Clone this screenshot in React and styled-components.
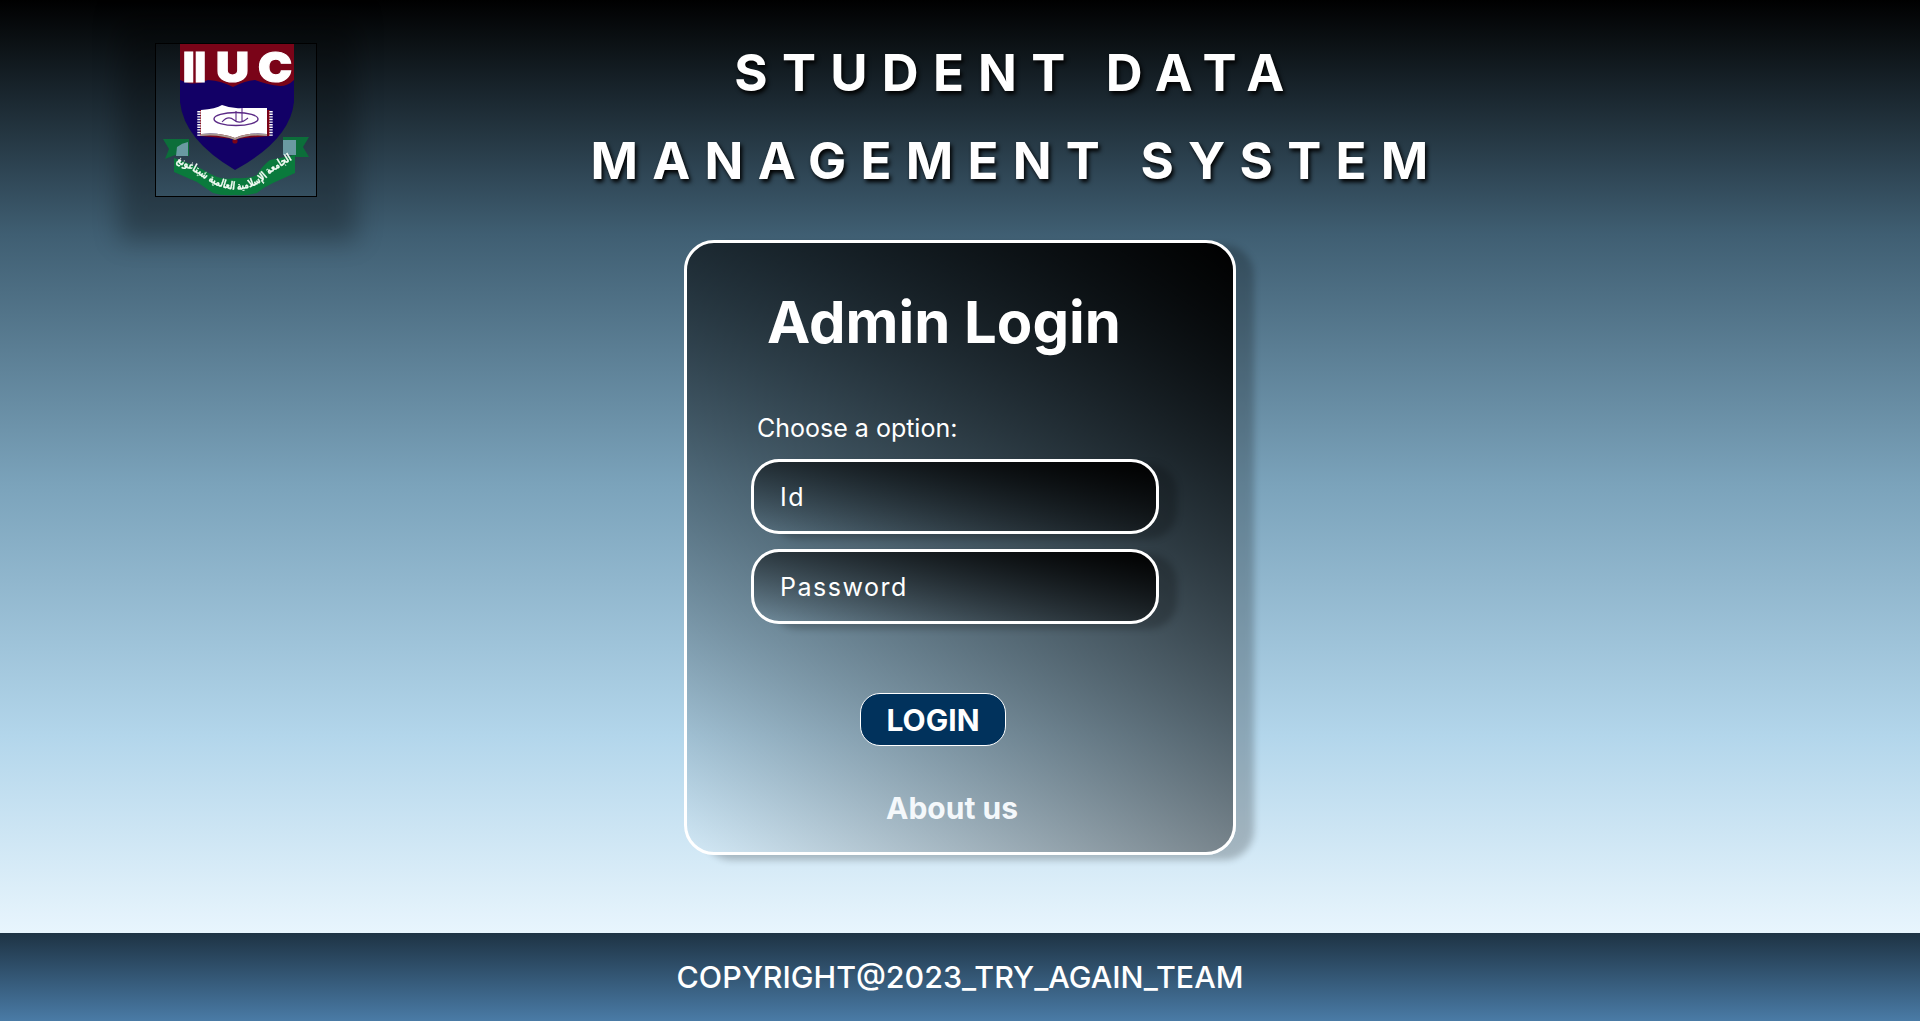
import React from "react";
import styled, { createGlobalStyle } from "styled-components";

const Global = createGlobalStyle`
  html, body {
    margin: 0;
    padding: 0;
    background: #fff;
    font-family: "Inter", "Liberation Sans", sans-serif;
  }
  * { box-sizing: border-box; }
`;

const Page = styled.div`
  height: 933px;
  background: linear-gradient(
    to bottom,
    #000000 0%,
    #3f5e72 25%,
    #7ba3bb 52%,
    #b3d6eb 79%,
    #e8f5fd 100%
  );
`;

const Header = styled.header`
  display: flex;
  align-items: flex-start;
  height: 240px;
  padding: 43px 204px 0 155px;
`;

const LogoBox = styled.div`
  flex: none;
  width: 162px;
  height: 154px;
  border: 1px solid #000;
  box-shadow: 2px 6px 24px 38px rgba(0, 0, 0, 0.28);
`;

const LogoArt = styled.svg`
  display: block;
  overflow: visible;
  filter: blur(0.3px);
`;

const TitleBlock = styled.div`
  flex: 1;
  display: flex;
  flex-direction: column;
  align-items: center;
  gap: 28px;
`;

const TitleLine = styled.h1`
  margin: 0;
  height: 60px;
  line-height: 60px;
  font-size: 51px;
  font-weight: 700;
  letter-spacing: 14.25px;
  color: #fff;
  white-space: pre;
  text-shadow: 2px 3px 4px #000;
`;

const Card = styled.main`
  width: 552px;
  height: 615px;
  margin: 0 auto;
  padding: 44px 60px 0 64px;
  border: 3px solid #fff;
  border-radius: 30px;
  background: linear-gradient(220deg, #000000, rgba(0, 0, 0, 0));
  box-shadow: 18px 5px 7px rgba(0, 0, 0, 0.22);
  display: flex;
  flex-direction: column;
`;

const CardTitle = styled.h2`
  margin: 0 0 0 16px;
  font-size: 58px;
  line-height: 70px;
  font-weight: 700;
  color: #fff;
`;

const OptionLabel = styled.label`
  margin: 56px 0 0 6px;
  font-size: 25px;
  line-height: 30px;
  font-weight: 400;
  color: #fff;
`;

const Field = styled.div`
  width: 408px;
  height: 75px;
  margin-top: ${(p) => p.$top}px;
  padding-left: 26px;
  display: flex;
  align-items: center;
  border: 3px solid #fff;
  border-radius: 28px;
  background: linear-gradient(to bottom left, #000000, rgba(0, 0, 0, 0));
  box-shadow: 18px 5px 7px rgba(0, 0, 0, 0.22);
  font-size: 25px;
  letter-spacing: 1.5px;
  color: #fff;
`;

const LoginButton = styled.button`
  width: 146px;
  height: 53px;
  margin: 69px 0 0 109px;
  padding: 0;
  border: 1px solid #fff;
  border-radius: 20px;
  background: #01325c;
  font-family: inherit;
  font-size: 30px;
  font-weight: 700;
  color: #fff;
`;

const AboutLink = styled.a`
  align-self: flex-start;
  margin: 44px 0 0 135px;
  font-size: 30px;
  line-height: 36px;
  font-weight: 700;
  color: #f4f8fb;
`;

const Footer = styled.footer`
  height: 88px;
  display: flex;
  align-items: center;
  justify-content: center;
  background: linear-gradient(to bottom, #1e3344, #4a7ba6);
  font-size: 30.4px;
  font-weight: 500;
  color: #fff;
`;

const Logo = () => (
  <LogoArt width="160" height="152" viewBox="0 0 160 152">
    {/* flags behind the ribbon */}
    <path d="M7 95H33V112L19 111L9 115L13 105Z" fill="#0c6e3a" />
    <path d="M21 103Q26 99 32 98V112H20Z" fill="#6a9aa2" />
    <path d="M127 93H153L147 103L153 113H140L127 108Z" fill="#0c6e3a" />
    <rect x="127" y="96" width="13" height="15" fill="#6a9aa2" />

    {/* shield */}
    <path d="M24 0H138V58Q134 96 79 126Q28 96 24 58Z" fill="#120066" />
    <path
      d="M24 0H138V36Q132 42 124 42Q112 41 99 36Q88 37 77 43Q66 37 52 36Q42 41 32 39L24 36Z"
      fill="#7a0418"
    />
    <text y="38" fontFamily="Inter, sans-serif" fontWeight="900" fontSize="41" fill="#fff" stroke="#fff" strokeWidth="1.2">
      <tspan x="27" textLength="23" lengthAdjust="spacingAndGlyphs">II</tspan>
      <tspan x="60" textLength="33" lengthAdjust="spacingAndGlyphs">U</tspan>
      <tspan x="102" textLength="34" lengthAdjust="spacingAndGlyphs">C</tspan>
    </text>

    {/* open book */}
    <path d="M44 92L79 95L114 92V66H110V90H48V66H44Z" fill="#7a0418" />
    <circle cx="79" cy="97" r="2.6" fill="#7a0418" />
    <path d="M45 66Q60 65 66 61Q76 65 86 64L111 64V90Q92 88 79 94Q64 88 45 90Z" fill="#fff" />
    <path d="M45 90Q64 88 79 94Q92 88 111 90V92Q92 90 79 96Q64 90 45 92Z" fill="#a89a90" />
    <path d="M43 67V92M115 67V92" stroke="#fff" strokeWidth="3.4" strokeDasharray="1.4 1.2" fill="none" />
    <ellipse cx="80" cy="75" rx="22" ry="6.5" fill="none" stroke="#5b2a86" strokeWidth="1.4" />
    <path d="M66 78Q72 71 78 76T92 74M86 64V78M80 67V78" fill="none" stroke="#5b2a86" strokeWidth="1.1" />

    {/* ribbon with the motto */}
    <path
      d="M18 114L42 123Q52 129 61 133Q70 136 79 134Q92 135 101 131Q106 122 114 116L139 111V129L117 139Q108 143 101 149Q90 152 79 151Q66 152 57 149Q48 143 41 138L18 128Z"
      fill="#0a7a3c"
    />
    <path id="mottoCurve" d="M20 118L42 130Q60 144 79 146Q102 145 116 128L137 115" fill="none" />
    <text fontFamily="'DejaVu Sans', sans-serif" fontSize="11" fontWeight="700" fill="#f2fbf4" stroke="#f2fbf4" strokeWidth="0.25">
      <textPath href="#mottoCurve" textLength="132" lengthAdjust="spacingAndGlyphs">
        الجامعة الإسلامية العالمية شيتاغونغ
      </textPath>
    </text>
  </LogoArt>
);

export default function App() {
  return (
    <>
      <Global />
      <Page>
        <Header>
          <LogoBox>
            <Logo />
          </LogoBox>
          <TitleBlock>
            <TitleLine>STUDENT DATA</TitleLine>
            <TitleLine>MANAGEMENT SYSTEM</TitleLine>
          </TitleBlock>
        </Header>
        <Card>
          <CardTitle>Admin Login</CardTitle>
          <OptionLabel>Choose a option:</OptionLabel>
          <Field $top={16}>Id</Field>
          <Field $top={15}>Password</Field>
          <LoginButton>LOGIN</LoginButton>
          <AboutLink>About us</AboutLink>
        </Card>
      </Page>
      <Footer>COPYRIGHT@2023_TRY_AGAIN_TEAM</Footer>
    </>
  );
}
